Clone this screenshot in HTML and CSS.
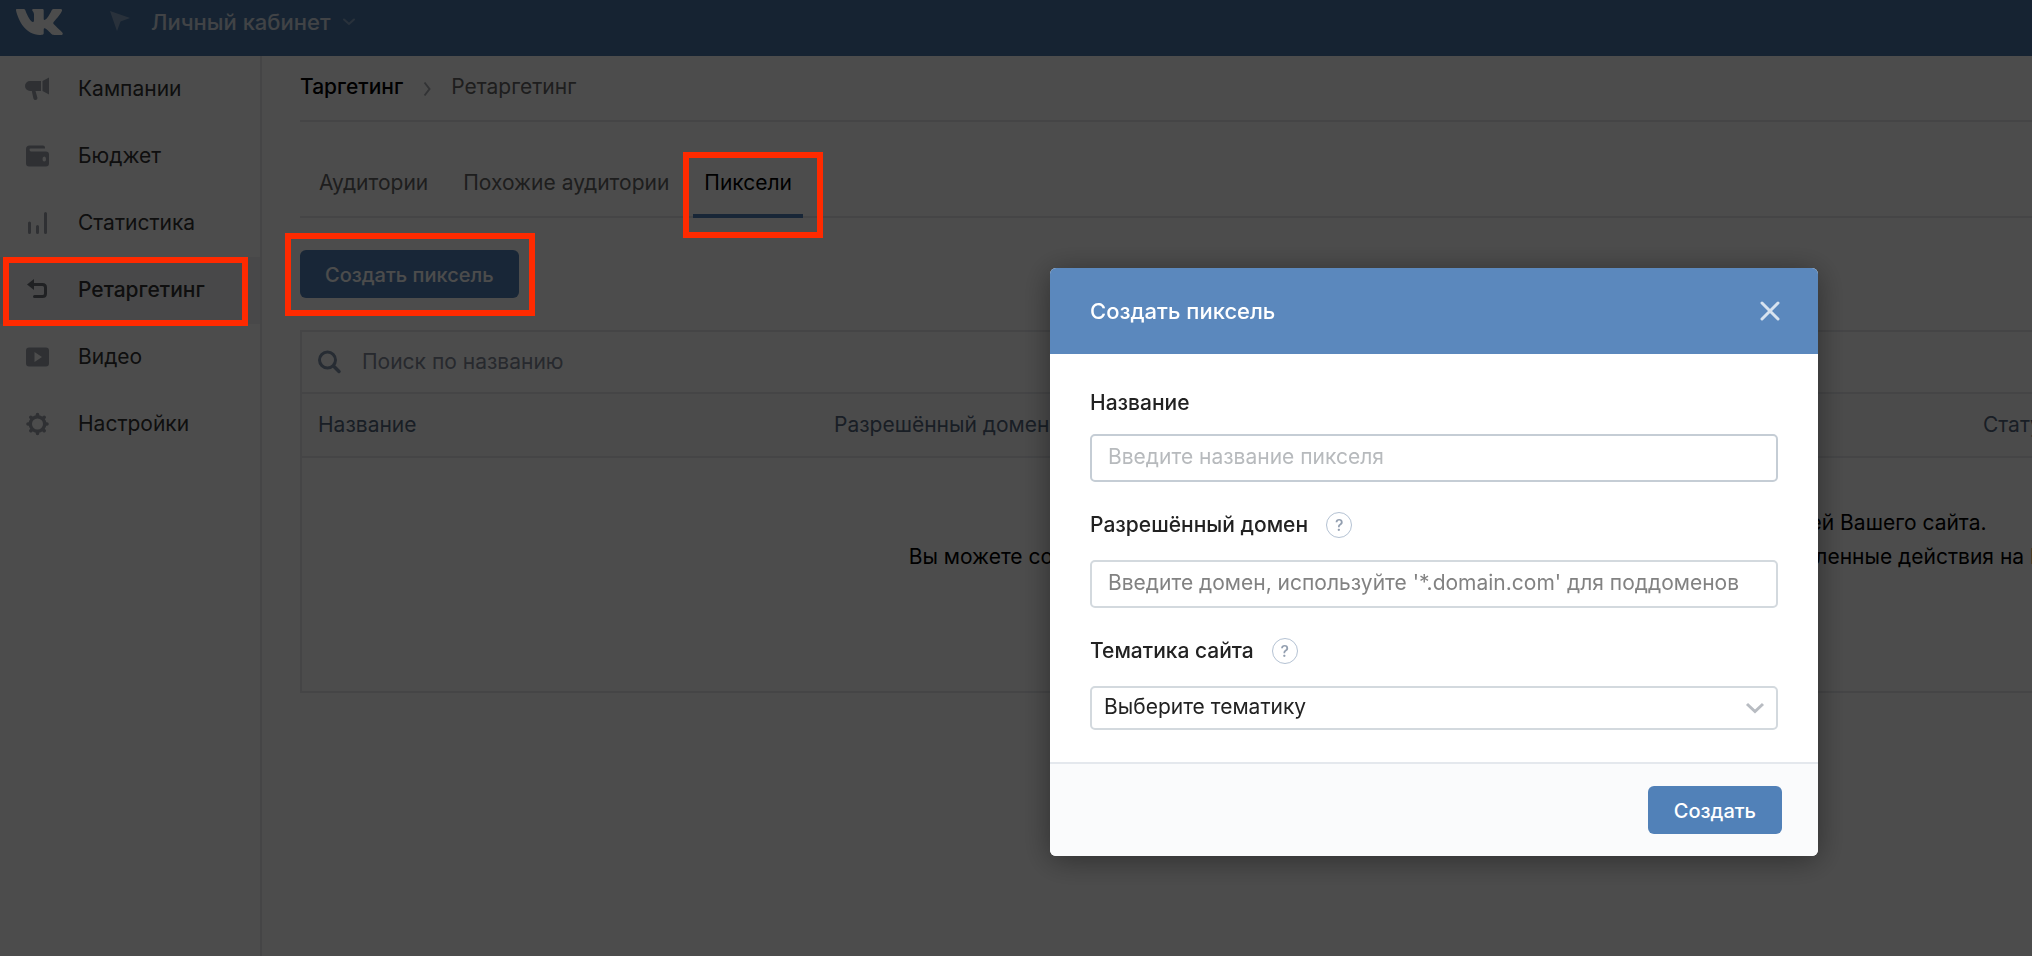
FILE: index.html
```html
<!DOCTYPE html>
<html lang="ru">
<head>
<meta charset="utf-8">
<title>Ретаргетинг — Личный кабинет</title>
<link rel="stylesheet" href="styles.css">
</head>
<body>
<header class="topbar">
  <a class="logo" href="#" aria-label="VK">
    <svg width="48" height="28" viewBox="0 0 48 28"><path fill="#fff" d="M0.600 1 H7.500 C8.600 1 9 1.500 9.400 2.500 C11.500 8.500 15 14 16.800 14 C17.600 14 18 13.500 18 12 V6.500 C17.900 3.500 16.200 3.200 16.200 2 C16.200 1.400 16.700 1 17.400 1 H26.500 C27.400 1 27.700 1.500 27.700 2.600 V10.800 C27.700 11.700 28.100 12 28.400 12 C29 12 29.600 11.700 30.700 10.600 C33.500 7.500 35.600 2.600 35.600 2.600 C35.900 1.800 36.400 1 37.500 1 H44.500 C46 1 46.300 1.800 46 2.700 C45.200 5.700 37.800 13.700 37.800 13.700 C37.200 14.700 36.900 15.200 37.800 16.300 C39.400 18.100 46.800 24.500 46.800 25.500 C46.800 26.600 46 27 44.700 27 H38 C36 27 35.500 26 32 22.600 C30.200 21 29.400 20.200 28.700 20.200 C28 20.200 27.700 20.500 27.700 22 V25 C27.700 26.300 27.300 27 23.500 27 C17.500 27 10.800 23.500 6.200 17 C2.500 11.500 0 3.500 0 2 C0 1.400 0.200 1 0.600 1Z"/></svg>
  </a>
  <button class="cabinet" type="button">
    <svg width="22" height="24" viewBox="0 0 22 24"><path fill="#8ba6c6" d="M1 1 21 8 11.500 11.500 8 21Z"/></svg>
    <span>Личный кабинет</span>
    <svg width="14" height="8" viewBox="0 0 14 8"><path d="M2 1.500 7 6 12 1.500" fill="none" stroke="#8ba6c6" stroke-width="2" stroke-linecap="round"/></svg>
  </button>
</header>
<div class="layout">
  <nav class="sidebar">
    <a class="nav-item" href="#"><svg width="24" height="24" viewBox="0 0 24 24"><path fill="currentColor" d="M5 4H16V14H10.500L12.500 21Q12.500 23 10.500 23 8.800 23 8.400 21.500L6.800 14H5A5 5 0 0 1 5 4ZM17.500 4 24 .5V17.500L17.500 14Z"/></svg>Кампании</a>
    <a class="nav-item" href="#"><svg width="24" height="24" viewBox="0 0 24 24"><path fill="currentColor" fill-rule="evenodd" d="M4.500 1.500H18A2 2 0 0 1 20 3.500V4.500H5.500Q4.500 4.500 4.500 5.500 4.500 7.500 6 7.500H21A3 3 0 0 1 24 10.500V19.500A3 3 0 0 1 21 22.500H4A3 3 0 0 1 1 19.500V5A3.500 3.500 0 0 1 4.500 1.500ZM19.300 12.500Q17.500 12.500 17.500 15T19.300 17.500 21 15 19.300 12.500Z"/></svg>Бюджет</a>
    <a class="nav-item" href="#"><svg width="24" height="24" viewBox="0 0 24 24"><path fill="none" stroke="currentColor" stroke-width="3" stroke-linecap="round" d="M4.500 12V21.500M12.500 15.500V21.500M20.500 2.500V21.500"/></svg>Статистика</a>
    <a class="nav-item nav-item-active" href="#"><svg width="24" height="24" viewBox="0 0 24 24"><path fill="currentColor" d="M2 6.500 9 1V12Z"/><path fill="none" stroke="currentColor" stroke-width="3" stroke-linecap="round" d="M8 6.500H17.500Q20.500 6.500 20.500 9.500V15.500Q20.500 18.500 17.500 18.500H9.500"/></svg>Ретаргетинг<i class="mark mark-nav"></i></a>
    <a class="nav-item" href="#"><svg width="24" height="24" viewBox="0 0 24 24"><path fill="currentColor" fill-rule="evenodd" d="M4 2.500H21A3 3 0 0 1 24 5.500V18.500A3 3 0 0 1 21 21.500H4A3 3 0 0 1 1 18.500V5.500A3 3 0 0 1 4 2.500ZM9.500 7V17L17 12Z"/></svg>Видео</a>
    <a class="nav-item" href="#"><svg width="24" height="24" viewBox="0 0 24 24"><circle cx="12.500" cy="12" r="7.200" fill="none" stroke="currentColor" stroke-width="3.400"/><path stroke="currentColor" stroke-width="3.600" stroke-linecap="round" d="M12.500 2.500V4M12.500 20V21.500M3 12H4.500M20.500 12H22M5.800 5.300 7 6.500M18 17.500 19.200 18.700M5.800 18.700 7 17.500M18 6.500 19.200 5.300"/></svg>Настройки</a>
  </nav>
  <main class="content">
    <div class="breadcrumbs">
      <a class="crumb" href="#">Таргетинг</a>
      <svg width="8" height="20" viewBox="0 0 8 20"><path d="M1.500 5.500 6.500 12 1.500 18.500" fill="none" stroke="#a8acb2" stroke-width="2"/></svg>
      <span class="crumb-current">Ретаргетинг</span>
    </div>
    <div class="tabs">
      <a class="tab" href="#">Аудитории</a>
      <a class="tab" href="#">Похожие аудитории</a>
      <a class="tab tab-active" href="#">Пиксели<i class="mark mark-tab"></i></a>
    </div>
    <div class="actions">
      <button class="button button-wide" type="button">Создать пиксель<i class="mark mark-button"></i></button>
    </div>
    <section class="panel">
      <label class="search">
        <svg width="24" height="24" viewBox="0 0 24 24"><circle cx="9.500" cy="10" r="8" fill="none" stroke="currentColor" stroke-width="3"/><path d="M16 16.500 21 21.500" stroke="currentColor" stroke-width="3.500" stroke-linecap="round"/></svg>
        <input class="search-input" type="search" placeholder="Поиск по названию">
      </label>
      <table class="pixels">
        <thead><tr><th class="col-name">Название</th><th class="col-domain">Разрешённый домен</th><th>Статус</th></tr></thead>
        <tbody><tr><td class="empty" colspan="3">Пиксель ретаргетинга поможет вам собрать аудитории из посетителей Вашего сайта.<br>Вы можете создавать правила, чтобы выделить в аудиторию тех, кто совершил определенные действия на Вашем сайте.</td></tr></tbody>
      </table>
    </section>
  </main>
</div>
<div class="overlay">
  <form class="dialog" role="dialog" aria-labelledby="dialog-title">
    <div class="dialog-head">
      <h2 class="dialog-title" id="dialog-title">Создать пиксель</h2>
      <button class="close" type="button" aria-label="Закрыть"><svg width="20" height="20" viewBox="0 0 20 20"><path d="M2 2 18 18M18 2 2 18" stroke="#d8e3ef" stroke-width="3" stroke-linecap="round"/></svg></button>
    </div>
    <div class="dialog-body">
      <div class="field">
        <div class="field-label"><label for="name">Название</label></div>
        <input class="text-input text-input-focus" id="name" type="text" placeholder="Введите название пикселя">
      </div>
      <div class="field">
        <div class="field-label field-label-help"><label for="domain">Разрешённый домен</label><button class="help" type="button">?</button></div>
        <input class="text-input" id="domain" type="text" placeholder="Введите домен, используйте '*.domain.com' для поддоменов">
      </div>
      <div class="field">
        <div class="field-label field-label-help"><label for="topic">Тематика сайта</label><button class="help" type="button">?</button></div>
        <div class="select-wrap">
          <select class="select" id="topic"><option>Выберите тематику</option></select>
          <svg class="select-arrow" width="20" height="12" viewBox="0 0 20 12"><path d="M2 2 10 9.500 18 2" fill="none" stroke="#b8bcc2" stroke-width="3"/></svg>
        </div>
      </div>
    </div>
    <div class="dialog-foot"><button class="button" type="submit">Создать</button></div>
  </form>
</div>
</body>
</html>
```
FILE: styles.css
```css
* { box-sizing: border-box; }
body {
  margin: 0;
  min-height: 100vh;
  display: flex;
  flex-direction: column;
  overflow: hidden;
  background: #fff;
  color: #000;
  font: 21px/28px Inter, "Liberation Sans", sans-serif;
}
a { color: inherit; text-decoration: none; }
button, input, select { font: inherit; }
svg { flex: none; display: block; }

.topbar {
  height: 56px;
  padding: 0 16px 12px;
  display: flex;
  align-items: center;
  gap: 45px;
  background: #4a76a8;
}
.logo { display: block; }
.cabinet {
  padding: 0;
  border: 0;
  background: none;
  display: flex;
  align-items: center;
  color: #dae2ea;
  font-size: 22px;
  font-weight: 500;
  gap: 20px;
}
.cabinet span + svg { margin-left: -8px; }

.layout { flex: 1; display: flex; }
.sidebar {
  flex: none;
  width: 262px;
  border-right: 2px solid #e7e8ec;
}
.nav-item {
  position: relative;
  height: 67px;
  padding: 0 26px 2px 25px;
  display: flex;
  align-items: center;
  gap: 29px;
  color: #333;
}
.nav-item svg { color: #9da2ab; }
.nav-item-active { background: #f0f2f5; font-weight: 500; }
.nav-item-active svg { color: #6b6f76; }

.mark {
  position: absolute;
  z-index: 20;
  border: 6px solid #ff2a00;
  pointer-events: none;
}
.mark-nav { inset: 0 12px -2px 3px; }
.mark-tab { inset: -14px -20px -24px -10px; }
.mark-button { inset: -17px -16px -18px -15px; }

.content { flex: 1; min-width: 0; overflow: clip; padding-left: 38px; }
.breadcrumbs {
  height: 66px;
  padding-bottom: 2px;
  display: flex;
  align-items: center;
  gap: 20px;
  border-bottom: 2px solid #e7e8ec;
}
.crumb { font-weight: 500; }
.crumb-current { color: #656565; }
.tabs {
  height: 96px;
  padding-left: 8px;
  display: flex;
  align-items: flex-end;
  gap: 13px;
  border-bottom: 2px solid #e7e8ec;
}
.tab {
  position: relative;
  height: 52px;
  margin-bottom: -2px;
  padding: 3px 11px 0;
  color: #656565;
}
.tab-active { color: #000; border-bottom: 4px solid #5181b8; }
.actions { padding: 32px 0; }
.button {
  position: relative;
  height: 48px;
  padding: 2px 26px 0;
  border: 0;
  border-radius: 6px;
  background: #5181b8;
  color: #fff;
  font-size: 20px;
  font-weight: 500;
}
.button-wide { padding: 2px 25px 0; }
.panel { width: 2480px; border: 2px solid #e7e8ec; }
.search {
  height: 60px;
  padding: 0 16px;
  display: flex;
  align-items: center;
  gap: 20px;
  color: #8295ab;
}
.search-input {
  flex: 1;
  padding: 0;
  border: 0;
  background: none;
  outline: none;
}
.search-input::placeholder { color: #828a99; opacity: 1; }
.pixels { width: 100%; border-collapse: collapse; table-layout: fixed; }
.pixels th {
  height: 64px;
  padding: 0 16px;
  border-top: 2px solid #e7e8ec;
  border-bottom: 2px solid #e7e8ec;
  background: #fafbfc;
  color: #55677d;
  font-weight: 400;
  text-align: left;
}
.col-name { width: 516px; }
.col-domain { width: 1149px; }
.empty {
  height: 234px;
  padding: 0 0 70px;
  text-align: center;
  line-height: 34px;
  white-space: nowrap;
}

.overlay {
  position: fixed;
  inset: 0;
  z-index: 10;
  padding: 268px 214px 0;
  display: flex;
  justify-content: flex-end;
  align-items: flex-start;
  background: rgba(0, 0, 0, .7);
}
.dialog {
  width: 768px;
  border-radius: 6px;
  overflow: hidden;
  background: #fff;
  color: #222;
  box-shadow: 0 4px 30px rgba(0, 0, 0, .4);
}
.dialog-head {
  height: 86px;
  padding: 0 38px 0 40px;
  display: flex;
  align-items: center;
  justify-content: space-between;
  background: #5b88bd;
}
.dialog-title { margin: 0; color: #fff; font-size: 22px; font-weight: 500; }
.close { padding: 0; border: 0; background: none; }
.dialog-body {
  padding: 35px 40px 32px;
  display: flex;
  flex-direction: column;
  gap: 29px;
}
.field { display: flex; flex-direction: column; gap: 17px; }
.field-label { display: flex; gap: 18px; align-items: center; font-weight: 500; }
.field-label-help { padding-bottom: 4px; }
.help {
  width: 26px;
  height: 26px;
  padding: 0;
  border: 1px solid #b4c2d3;
  border-radius: 50%;
  background: none;
  color: #939fb0;
  font-size: 16px;
  line-height: 24px;
}
.text-input, .select {
  width: 100%;
  border: 2px solid #d3d9de;
  border-radius: 5px;
  background: #fff;
  color: #222;
  outline: none;
}
.text-input { height: 48px; padding: 0 16px 3px; }
.text-input::placeholder { color: #828282; opacity: 1; }
.text-input-focus { border-color: #c5cdd5; }
.text-input-focus::placeholder { color: #b7babd; }
.select-wrap { position: relative; }
.select { display: block; height: 44px; padding: 0 12px 2px; appearance: none; }
.select-arrow { position: absolute; right: 13px; top: 16px; pointer-events: none; }
.dialog-foot {
  height: 94px;
  padding: 0 36px;
  display: flex;
  align-items: center;
  justify-content: flex-end;
  border-top: 2px solid #e4e8ed;
  background: #fafbfc;
}
```
